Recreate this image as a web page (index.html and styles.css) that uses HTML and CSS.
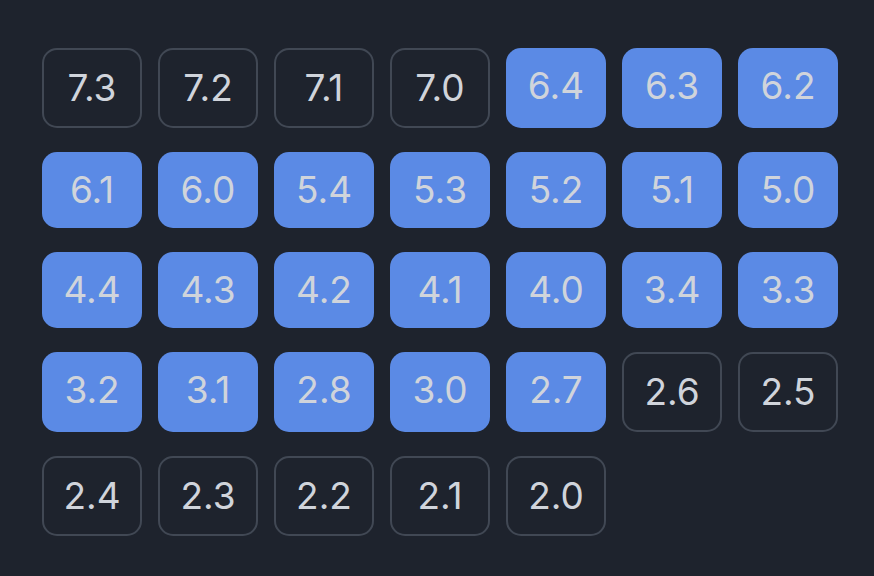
FILE: index.html
```html
<!DOCTYPE html>
<html lang="en">
<head>
    <meta charset="UTF-8">
    <meta name="viewport" content="width=device-width, initial-scale=1.0">
    <title>Versions</title>
    <link rel="stylesheet" href="styles.css">
</head>
<body>

<div class="versions">
    <div class="ver">7.3</div>
    <div class="ver">7.2</div>
    <div class="ver">7.1</div>
    <div class="ver">7.0</div>
    <div class="ver on">6.4</div>
    <div class="ver on">6.3</div>
    <div class="ver on">6.2</div>

    <div class="ver on">6.1</div>
    <div class="ver on">6.0</div>
    <div class="ver on">5.4</div>
    <div class="ver on">5.3</div>
    <div class="ver on">5.2</div>
    <div class="ver on">5.1</div>
    <div class="ver on">5.0</div>

    <div class="ver on">4.4</div>
    <div class="ver on">4.3</div>
    <div class="ver on">4.2</div>
    <div class="ver on">4.1</div>
    <div class="ver on">4.0</div>
    <div class="ver on">3.4</div>
    <div class="ver on">3.3</div>

    <div class="ver on">3.2</div>
    <div class="ver on">3.1</div>
    <div class="ver on">2.8</div>
    <div class="ver on">3.0</div>
    <div class="ver on">2.7</div>
    <div class="ver">2.6</div>
    <div class="ver">2.5</div>

    <div class="ver">2.4</div>
    <div class="ver">2.3</div>
    <div class="ver">2.2</div>
    <div class="ver">2.1</div>
    <div class="ver">2.0</div>
</div>

</body>
</html>
```
FILE: styles.css
```css
body {
    margin: 0;
    background-color: #1e232d;
    font-family: Inter, "Noto Sans", sans-serif;
    color: #d0d4db;
}
.versions {
    display: grid;
    grid-template-columns: repeat(7, 100px);
    column-gap: 16px;
    row-gap: 24px;
    padding: 48px 0 0 42px;
}
.ver {
    box-sizing: border-box;
    height: auto;
    line-height: 76px;
    font-size: 37px;
    text-align: center;
    border: 2px solid #414854;
    border-radius: 15px;
}
/* selected ones have no border */
.ver.on {
    border: none;
    background-color: #5b8ae5;
}
```
